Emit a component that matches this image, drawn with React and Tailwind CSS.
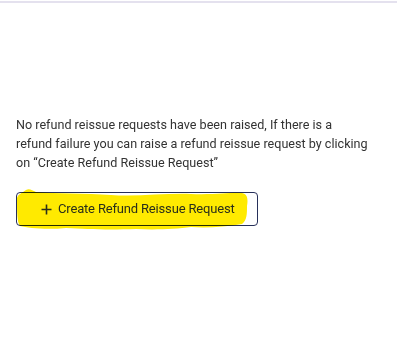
import React from "react";

const Highlight = () => (
    <svg
        className="pointer-events-none absolute left-[-1px] top-[-1px] mix-blend-multiply"
        width="242"
        height="40"
        viewBox="0 0 242 40"
        style={{ overflow: "visible" }}
    >
        <path
            d="M1 6 C2 2 6 1 10 -2 C13 -4 16 -2 20 0 C40 2 70 1 95 3 C120 5 150 1 175 2 C200 3 215 0 226 1 C232 2 232 8 231 14 C231 22 231 28 226 32 C210 35 190 36 175 35 C160 37 140 38 120 37 C90 38 70 37 50 36 C30 38 12 36 4 34 C1 30 1 20 1 6 Z"
            fill="#ffea00"
        />
    </svg>
);

export default function App() {
    return (
        <div
            className="w-[397px] h-[356px] bg-white relative overflow-hidden"
            style={{ fontFamily: "Roboto, 'Liberation Sans', sans-serif" }}
        >
            {/* top divider */}
            <div className="h-[2px] w-full bg-[#e4e1ee] mt-[1px]" />

            <div className="px-4 pt-[112px]">
                <p className="w-[370px] text-[12.6px] leading-[19px] text-[#333333]">
                    No refund reissue requests have been raised, If there is a
                    <br />
                    refund failure you can raise a refund reissue request by clicking
                    <br />
                    on “Create Refund Reissue Request”
                </p>

                <button className="relative mt-[20px] w-[242px] h-[34px] rounded-[4px] border border-[#27305a] bg-white flex items-center pl-[24px] text-[13px] tracking-[-0.17px] text-[#2a2f1a]">
                    <Highlight />
                    <span className="relative flex items-center gap-[6px]">
                        <svg width="11" height="11" viewBox="0 0 11 11">
                            <path d="M5.5 0.5 V10.5 M0.5 5.5 H10.5" stroke="#2a2f1a" strokeWidth="1.6" />
                        </svg>
                        Create Refund Reissue Request
                    </span>
                </button>
            </div>
        </div>
    );
}
